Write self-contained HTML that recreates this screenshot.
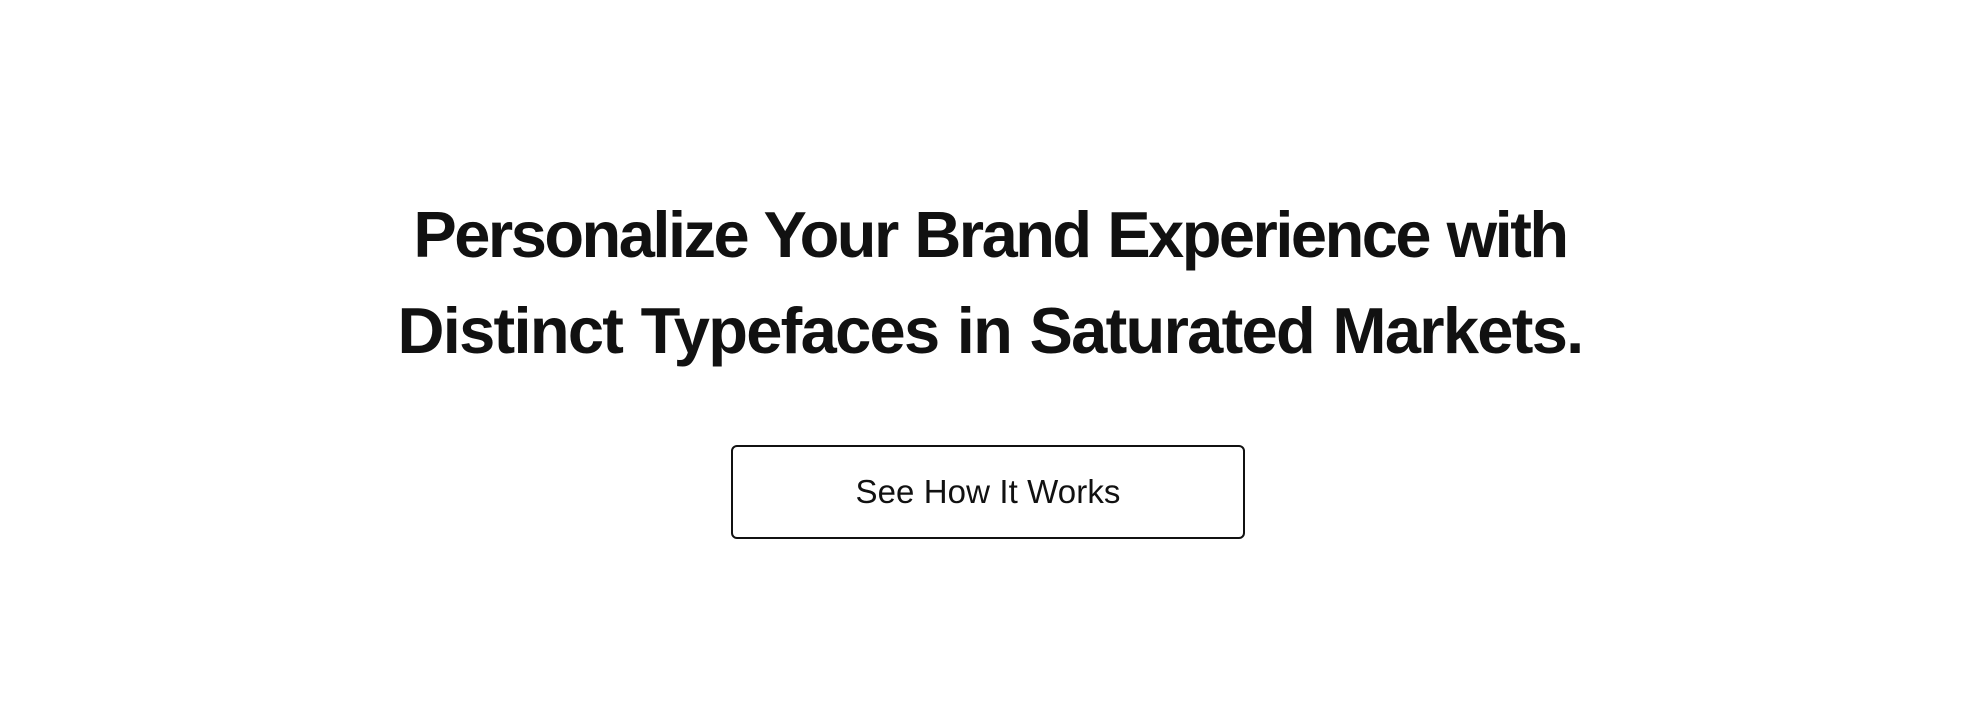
<!DOCTYPE html>
<html><head><style>
html,body{margin:0;padding:0;background:#fff;width:1980px;height:722px;overflow:hidden}
body{font-family:"Liberation Sans",sans-serif;color:#111}
h1{position:absolute;left:0;width:1980px;top:187px;margin:0;text-align:center;font-size:65px;font-weight:700;line-height:96px;letter-spacing:-2.5px;word-spacing:2px}
h1 span{display:block}
h1 span.l2{letter-spacing:-1.7px}
.btn{position:absolute;left:731px;top:445px;width:510px;height:90px;border:2px solid #111;border-radius:6px;display:flex;align-items:center;justify-content:center;font-size:33px;letter-spacing:0.1px}
</style></head><body>
<h1><span>Personalize Your Brand Experience with</span><span class="l2">Distinct Typefaces in Saturated Markets.</span></h1>
<div class="btn">See How It Works</div>
</body></html>
